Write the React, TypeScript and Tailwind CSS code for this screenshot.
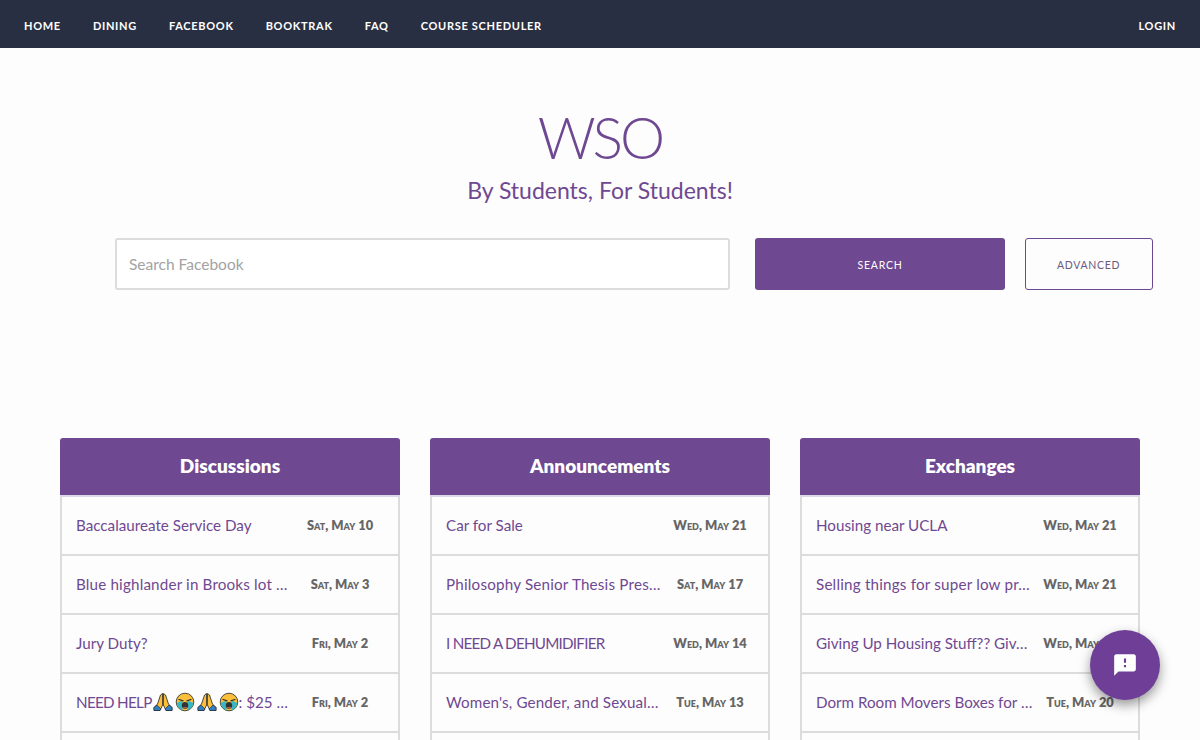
const navLinks = ['Home', 'Dining', 'Facebook', 'BookTrak', 'FAQ', 'Course Scheduler']

interface Post {
  title: React.ReactNode
  date: string
  fit?: string // nudges the width of the line to the one in the picture
}

function PrayEmoji() {
  return (
    <svg viewBox="0 0 20 20" className="inline-block h-[20px] w-[20px] shrink-0">
      <path d="M9.5 1.5 L9.6 13 L7 18.5 H1 L1 15.5 L4.5 12 L7.5 3 Z" fill="#fbbf3c" stroke="#222" strokeWidth="0.8" />
      <path d="M10.5 1.5 L10.4 13 L13 18.5 H19 L19 15.5 L15.5 12 L12.5 3 Z" fill="#fbbf3c" stroke="#222" strokeWidth="0.8" />
      <path d="M1 15.5 L4 13 L8 17 L7 18.5 H1 Z" fill="#2f7fc4" stroke="#222" strokeWidth="0.6" />
      <path d="M19 15.5 L16 13 L12 17 L13 18.5 H19 Z" fill="#2f7fc4" stroke="#222" strokeWidth="0.6" />
    </svg>
  )
}

function CryEmoji() {
  return (
    <svg viewBox="0 0 20 20" className="inline-block h-[20px] w-[20px] shrink-0">
      <circle cx="10" cy="10" r="8.8" fill="#fbbf3c" stroke="#222" strokeWidth="0.8" />
      <path d="M1.6 11 L7.5 8.5 L7.5 18.4 C4.5 17.5 2.5 15 1.6 11 Z" fill="#35b8c4" />
      <path d="M18.4 11 L12.5 8.5 L12.5 18.4 C15.5 17.5 17.5 15 18.4 11 Z" fill="#35b8c4" />
      <path d="M4 7.5 L8 8.8 M16 7.5 L12 8.8" stroke="#222" strokeWidth="1.2" strokeLinecap="round" />
      <ellipse cx="10" cy="13.4" rx="3.2" ry="3.4" fill="#333" />
      <path d="M7.8 15.3 H12.2 V16.2 H7.8 Z" fill="#e86a6a" />
    </svg>
  )
}

const columns: { name: string; posts: Post[] }[] = [
  {
    name: 'Discussions',
    posts: [
      { title: 'Baccalaureate Service Day', date: 'Sat, May 10' },
      { title: 'Blue highlander in Brooks lot …', date: 'Sat, May 3', fit: 'tracking-[0.17px]' },
      { title: 'Jury Duty?', date: 'Fri, May 2' },
      {
        title: (
          <span className="flex items-center">
            <span className="tracking-[-0.7px]">NEED HELP</span>
            <span className="ml-px" />
            <PrayEmoji />
            <span className="w-[2px]" />
            <CryEmoji />
            <span className="w-[2px]" />
            <PrayEmoji />
            <span className="w-[2px]" />
            <CryEmoji />
            <span>: $25 …</span>
          </span>
        ),
        date: 'Fri, May 2',
      },
    ],
  },
  {
    name: 'Announcements',
    posts: [
      { title: 'Car for Sale', date: 'Wed, May 21' },
      { title: 'Philosophy Senior Thesis Pres…', date: 'Sat, May 17', fit: 'tracking-[0.2px]' },
      { title: 'I NEED A DEHUMIDIFIER', date: 'Wed, May 14', fit: 'tracking-[-0.75px]' },
      { title: "Women's, Gender, and Sexual…", date: 'Tue, May 13', fit: 'tracking-[0.14px]' },
    ],
  },
  {
    name: 'Exchanges',
    posts: [
      { title: 'Housing near UCLA', date: 'Wed, May 21' },
      { title: 'Selling things for super low pr…', date: 'Wed, May 21', fit: 'tracking-[0.2px]' },
      { title: 'Giving Up Housing Stuff?? Giv…', date: 'Wed, May 21' },
      { title: 'Dorm Room Movers Boxes for …', date: 'Tue, May 20' },
    ],
  },
]

function PostColumn({ name, posts }: { name: string; posts: Post[] }) {
  return (
    <div className="w-[340px]">
      <div className="flex h-[57px] items-center justify-center rounded-t-[3px] bg-[#6f4892] pb-px text-[19px] font-extrabold text-white">
        {name}
      </div>
      <div className="border-x-2 border-t-2 border-x-[#dcdcdc] border-t-[#ddd5e8]">
        {posts.map((post, i) => (
          <div key={i} className="flex h-[59px] items-center border-b-2 border-[#dcdcdc] pl-[14px]">
            <div className={`w-[214px] shrink-0 whitespace-nowrap text-[15.2px] text-[#6f4892] ${post.fit ?? ''}`}>
              {post.title}
            </div>
            <div className="flex-1 pr-[8px] text-center text-[12.8px] font-extrabold text-[#666] [font-variant:small-caps]">
              {post.date}
            </div>
          </div>
        ))}
        <div className="h-[59px]" />
      </div>
    </div>
  )
}

export default function App() {
  return (
    <div className="relative h-[740px] overflow-hidden bg-[#fdfdfd] font-['Lato','Liberation_Sans',sans-serif]">
      <nav className="flex h-12 items-center justify-between bg-[#292f42] px-6 pt-[4px] text-[11px] font-bold uppercase tracking-[0.7px] text-white">
        <div className="flex gap-8">
          {navLinks.map((link) => (
            <a key={link}>{link}</a>
          ))}
        </div>
        <a>Login</a>
      </nav>

      <header className="pt-[51px] text-center text-[#6f4892]">
        <h1 className="text-[57px] leading-[76px] font-light tracking-[-3px]">WSO</h1>
        <p className="text-[23px] leading-[30px]">By Students, For Students!</p>
      </header>

      <div className="mt-[33px] flex pl-[115px]">
        <input
          placeholder="Search Facebook"
          className="h-[52px] w-[615px] rounded-[3px] border-2 border-[#dcdcdc] bg-white px-[12px] text-[15.5px] outline-none placeholder:text-[#a3a3a3]"
        />
        <button className="ml-[25px] h-[52px] w-[250px] rounded-[3px] bg-[#6f4892] pt-[3px] text-[10.5px] tracking-[0.8px] text-white uppercase">
          Search
        </button>
        <button className="ml-[20px] h-[52px] w-[128px] rounded-[3px] border border-[#6f4892] pt-[3px] pr-px text-[10.5px] tracking-[0.7px] text-[#6b5a7e] uppercase">
          Advanced
        </button>
      </div>

      <div className="mt-[148px] flex justify-center gap-[30px]">
        {columns.map((col) => (
          <PostColumn key={col.name} name={col.name} posts={col.posts} />
        ))}
      </div>

      <button className="absolute top-[630px] left-[1090px] flex h-[70px] w-[70px] items-center justify-center rounded-full bg-[#6f3f98] shadow-[0_5px_12px_rgba(0,0,0,0.4)]">
        <svg viewBox="0 0 24 24" className="h-[26px] w-[26px]" fill="#fff">
          <path d="M20 2H4c-1.1 0-1.99.9-1.99 2L2 22l4-4h14c1.1 0 2-.9 2-2V4c0-1.1-.9-2-2-2zm-7 12h-2v-2h2v2zm0-4h-2V6h2v4z" />
        </svg>
      </button>
    </div>
  )
}
